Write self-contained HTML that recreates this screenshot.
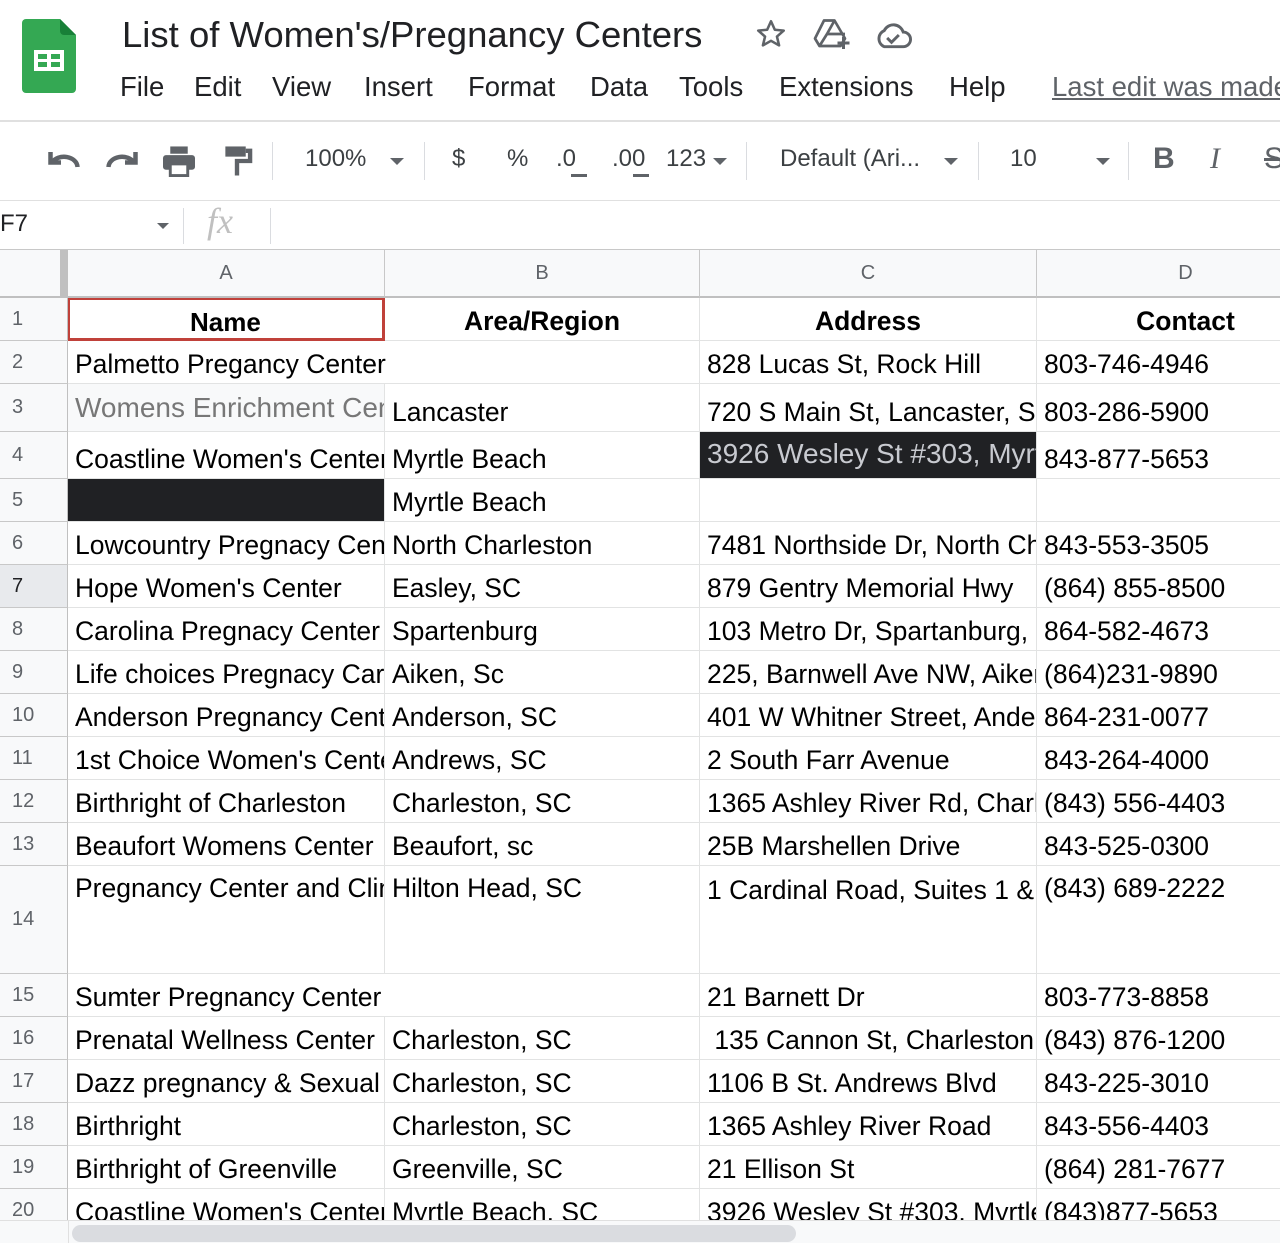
<!DOCTYPE html>
<html><head><meta charset="utf-8">
<style>
*{box-sizing:border-box;margin:0;padding:0}
body{width:1280px;height:1243px;overflow:hidden;background:#fff;font-family:"Liberation Sans",Arial,sans-serif;position:relative;color:#000}
.a{position:absolute}
.t{white-space:nowrap}
.c{position:absolute;overflow:hidden;white-space:nowrap;font-size:26.5px;line-height:30px;padding-left:7px;display:flex;align-items:flex-end;padding-bottom:4px;border-right:1px solid #e2e3e3;border-bottom:1px solid #e2e3e3}
.rh{position:absolute;left:0;width:68px;background:#f8f9fa;color:#5f6368;font-size:20px;padding-left:12px;display:flex;align-items:center;border-bottom:1px solid #c8c8c8;border-right:1px solid #c0c0c0}
.ch{position:absolute;top:250px;height:48px;background:#f8f9fa;color:#5f6368;font-size:20px;display:flex;align-items:center;justify-content:center;border-right:1px solid #c8c8c8;border-bottom:2px solid #c0c0c0}
.tb{position:absolute;top:145px;font-size:24px;color:#3c4043}
.sep{position:absolute;top:142px;width:1px;height:38px;background:#dadce0}
.dd{position:absolute;width:0;height:0;border-left:7px solid transparent;border-right:7px solid transparent;border-top:7px solid #5f6368}
</style></head><body>
<svg class="a" style="left:22px;top:19px" width="54" height="74" viewBox="0 0 54 74">
<path d="M4 0H38L54 16V70a4 4 0 0 1-4 4H4a4 4 0 0 1-4-4V4a4 4 0 0 1 4-4z" fill="#34a853"/>
<path d="M38 0L54 16H42a4 4 0 0 1-4-4z" fill="#188038"/>
<rect x="12" y="31" width="30" height="21" fill="#fff"/>
<rect x="16" y="35" width="9" height="5" fill="#34a853"/><rect x="29" y="35" width="9" height="5" fill="#34a853"/>
<rect x="16" y="43" width="9" height="5" fill="#34a853"/><rect x="29" y="43" width="9" height="5" fill="#34a853"/>
</svg>
<div class="a t" style="left:122px;top:14px;font-size:36.5px;color:#202124">List of Women's/Pregnancy Centers</div>
<svg class="a" style="left:754px;top:17px" width="34" height="34" viewBox="0 0 24 24"><path d="M12 3l2.7 6 6.3.6-4.8 4.2 1.5 6.2L12 16.8 6.3 20l1.5-6.2L3 9.6 9.3 9z" fill="none" stroke="#5f6368" stroke-width="1.8" stroke-linejoin="round"/></svg>
<svg class="a" style="left:812px;top:16px" width="42" height="36" viewBox="0 0 28 24"><path d="M8 3h7l7 12-3 5H5L2 15z M5 20l5-8 M15 3l-5 9h12" fill="none" stroke="#5f6368" stroke-width="1.8" stroke-linejoin="round"/><path d="M21 14v8M17 18h8" stroke="#5f6368" stroke-width="2"/></svg>
<svg class="a" style="left:874px;top:20px" width="38" height="30" viewBox="0 0 26 20"><path d="M7 18h13a5 5 0 0 0 0-10 7 7 0 0 0-13-1 6 6 0 0 0 0 11z" fill="none" stroke="#5f6368" stroke-width="2"/><path d="M9 12l3 3 5-5" fill="none" stroke="#5f6368" stroke-width="2"/></svg>
<div class="a t" style="left:120px;top:71px;font-size:27.5px;color:#202124">
<span style="position:absolute;left:0">File</span><span style="position:absolute;left:74px">Edit</span><span style="position:absolute;left:152px">View</span><span style="position:absolute;left:244px">Insert</span><span style="position:absolute;left:348px">Format</span><span style="position:absolute;left:470px">Data</span><span style="position:absolute;left:559px">Tools</span><span style="position:absolute;left:659px">Extensions</span><span style="position:absolute;left:829px">Help</span><span style="position:absolute;left:932px;color:#5f6368;text-decoration:underline">Last edit was made</span></div>
<div class="a" style="left:0;top:120px;width:1280px;height:2px;background:#e0e0e0"></div>
<svg class="a" style="left:46px;top:146px" width="36" height="30" viewBox="0 0 24 20"><path d="M3 4v7h7" fill="none" stroke="#5f6368" stroke-width="3"/><path d="M4 11a9 7 0 0 1 17 3" fill="none" stroke="#5f6368" stroke-width="3"/></svg>
<svg class="a" style="left:104px;top:146px" width="36" height="30" viewBox="0 0 24 20"><path d="M21 4v7h-7" fill="none" stroke="#5f6368" stroke-width="3"/><path d="M20 11a9 7 0 0 0-17 3" fill="none" stroke="#5f6368" stroke-width="3"/></svg>
<svg class="a" style="left:161px;top:145px" width="36" height="32" viewBox="0 0 24 22"><rect x="6" y="1" width="12" height="5" fill="#5f6368"/><rect x="1" y="7" width="22" height="10" rx="2" fill="#5f6368"/><rect x="6" y="13" width="12" height="8" fill="#fff" stroke="#5f6368" stroke-width="2"/></svg>
<svg class="a" style="left:221px;top:145px" width="32" height="32" viewBox="0 0 20 22"><rect x="2" y="1" width="14" height="7" fill="#5f6368"/><path d="M16 4h3v7h-9v10" fill="none" stroke="#5f6368" stroke-width="3"/></svg>
<div class="sep" style="left:272px"></div>
<div class="tb" style="left:305px">100%</div><div class="dd" style="left:390px;top:158px"></div>
<div class="sep" style="left:424px"></div>
<div class="tb" style="left:452px">$</div><div class="tb" style="left:507px">%</div>
<div class="tb" style="left:556px">.0</div><div class="tb" style="left:612px">.00</div>
<div class="a" style="left:571px;top:174px;width:16px;height:3px;background:#5f6368"></div>
<div class="a" style="left:633px;top:174px;width:16px;height:3px;background:#5f6368"></div>
<div class="tb" style="left:666px">123</div><div class="dd" style="left:713px;top:158px"></div>
<div class="sep" style="left:746px"></div>
<div class="tb" style="left:780px">Default (Ari...</div><div class="dd" style="left:944px;top:158px"></div>
<div class="sep" style="left:978px"></div>
<div class="tb" style="left:1010px">10</div><div class="dd" style="left:1096px;top:158px"></div>
<div class="sep" style="left:1128px"></div>
<div class="a t" style="left:1153px;top:142px;font-size:30px;font-weight:bold;color:#5f6368">B</div>
<div class="a t" style="left:1210px;top:142px;font-size:30px;font-style:italic;font-family:'Liberation Serif',serif;color:#5f6368">I</div>
<div class="a t" style="left:1264px;top:142px;font-size:30px;color:#5f6368;text-decoration:line-through">S</div>
<div class="a" style="left:0;top:200px;width:1280px;height:1px;background:#e0e0e0"></div>
<div class="a t" style="left:0;top:210px;font-size:24px;color:#202124">F7</div>
<div class="dd" style="left:157px;top:223px;border-width:6px 6px 0"></div>
<div class="a" style="left:183px;top:208px;width:1px;height:36px;background:#dadce0"></div>
<div class="a t" style="left:207px;top:200px;font-size:36px;font-style:italic;font-family:'Liberation Serif',serif;color:#c0c0c0">fx</div>
<div class="a" style="left:270px;top:208px;width:1px;height:36px;background:#dadce0"></div>
<div class="a" style="left:0;top:249px;width:1280px;height:1px;background:#c8c8c8"></div>
<div class="a" style="left:0;top:250px;width:68px;height:48px;background:#f8f9fa;border-bottom:2px solid #c0c0c0"></div>
<div class="a" style="left:60px;top:250px;width:8px;height:48px;background:#c0c0c0"></div>
<div class="ch" style="left:68px;width:317px">A</div>
<div class="ch" style="left:385px;width:315px">B</div>
<div class="ch" style="left:700px;width:337px">C</div>
<div class="ch" style="left:1037px;width:298px">D</div>

<div class="rh" style="top:298px;height:43px">1</div>
<div class="c" style="left:68px;top:298px;width:317px;height:43px"></div>
<div class="a" style="left:68px;top:298px;width:317px;height:43px;border:3px solid #c0413a;border-width:2px 3px 3px 2px"></div>
<div class="a t" style="left:190px;top:307px;font-size:26px;font-weight:bold">Name</div>
<div class="c" style="left:385px;top:298px;width:315px;height:43px;justify-content:center;font-weight:bold;padding-left:0">Area/Region</div>
<div class="c" style="left:700px;top:298px;width:337px;height:43px;justify-content:center;font-weight:bold;padding-left:0">Address</div>
<div class="c" style="left:1037px;top:298px;width:298px;height:43px;justify-content:center;font-weight:bold;padding-left:0">Contact</div>

<div class="rh" style="top:341px;height:43px">2</div>
<div class="c" style="left:68px;top:341px;width:632px;height:43px">Palmetto Pregancy Center</div>
<div class="c" style="left:700px;top:341px;width:337px;height:43px">828 Lucas St, Rock Hill</div>
<div class="c" style="left:1037px;top:341px;width:298px;height:43px">803-746-4946</div>

<div class="rh" style="top:384px;height:48px">3</div>
<div class="c" style="left:68px;top:384px;width:317px;height:48px;background:#f8f9fa;color:#777;align-items:center;padding-bottom:0;font-size:28px">Womens Enrichment Center</div>
<div class="c" style="left:385px;top:384px;width:315px;height:48px">Lancaster</div>
<div class="c" style="left:700px;top:384px;width:337px;height:48px">720 S Main St, Lancaster, SC</div>
<div class="c" style="left:1037px;top:384px;width:298px;height:48px">803-286-5900</div>

<div class="rh" style="top:432px;height:47px">4</div>
<div class="c" style="left:68px;top:432px;width:317px;height:47px">Coastline Women's Center</div>
<div class="c" style="left:385px;top:432px;width:315px;height:47px">Myrtle Beach</div>
<div class="c" style="left:700px;top:432px;width:337px;height:47px;background:#202124;color:#c8cad0;font-size:28px;align-items:center;padding-bottom:2px">3926 Wesley St #303, Myrtle</div>
<div class="c" style="left:1037px;top:432px;width:298px;height:47px">843-877-5653</div>

<div class="rh" style="top:479px;height:43px">5</div>
<div class="c" style="left:68px;top:479px;width:317px;height:43px;background:#202124"></div>
<div class="c" style="left:385px;top:479px;width:315px;height:43px">Myrtle Beach</div>
<div class="c" style="left:700px;top:479px;width:337px;height:43px"></div>
<div class="c" style="left:1037px;top:479px;width:298px;height:43px"></div>

<div class="rh" style="top:522px;height:43px">6</div>
<div class="c" style="left:68px;top:522px;width:317px;height:43px">Lowcountry Pregnacy Center</div>
<div class="c" style="left:385px;top:522px;width:315px;height:43px">North Charleston</div>
<div class="c" style="left:700px;top:522px;width:337px;height:43px">7481 Northside Dr, North Charleston</div>
<div class="c" style="left:1037px;top:522px;width:298px;height:43px">843-553-3505</div>

<div class="rh" style="top:565px;height:43px;background:#e8eaed;color:#202124">7</div>
<div class="c" style="left:68px;top:565px;width:317px;height:43px">Hope Women's Center</div>
<div class="c" style="left:385px;top:565px;width:315px;height:43px">Easley, SC</div>
<div class="c" style="left:700px;top:565px;width:337px;height:43px">879 Gentry Memorial Hwy</div>
<div class="c" style="left:1037px;top:565px;width:298px;height:43px">(864) 855-8500</div>

<div class="rh" style="top:608px;height:43px">8</div>
<div class="c" style="left:68px;top:608px;width:317px;height:43px">Carolina Pregnacy Center</div>
<div class="c" style="left:385px;top:608px;width:315px;height:43px">Spartenburg</div>
<div class="c" style="left:700px;top:608px;width:337px;height:43px">103 Metro Dr, Spartanburg, SC</div>
<div class="c" style="left:1037px;top:608px;width:298px;height:43px">864-582-4673</div>

<div class="rh" style="top:651px;height:43px">9</div>
<div class="c" style="left:68px;top:651px;width:317px;height:43px">Life choices Pregnacy Care</div>
<div class="c" style="left:385px;top:651px;width:315px;height:43px">Aiken, Sc</div>
<div class="c" style="left:700px;top:651px;width:337px;height:43px">225, Barnwell Ave NW, Aiken</div>
<div class="c" style="left:1037px;top:651px;width:298px;height:43px">(864)231-9890</div>

<div class="rh" style="top:694px;height:43px">10</div>
<div class="c" style="left:68px;top:694px;width:317px;height:43px">Anderson Pregnancy Center</div>
<div class="c" style="left:385px;top:694px;width:315px;height:43px">Anderson, SC</div>
<div class="c" style="left:700px;top:694px;width:337px;height:43px">401 W Whitner Street, Anderson</div>
<div class="c" style="left:1037px;top:694px;width:298px;height:43px">864-231-0077</div>

<div class="rh" style="top:737px;height:43px">11</div>
<div class="c" style="left:68px;top:737px;width:317px;height:43px">1st Choice Women's Center</div>
<div class="c" style="left:385px;top:737px;width:315px;height:43px">Andrews, SC</div>
<div class="c" style="left:700px;top:737px;width:337px;height:43px">2 South Farr Avenue</div>
<div class="c" style="left:1037px;top:737px;width:298px;height:43px">843-264-4000</div>

<div class="rh" style="top:780px;height:43px">12</div>
<div class="c" style="left:68px;top:780px;width:317px;height:43px">Birthright of Charleston</div>
<div class="c" style="left:385px;top:780px;width:315px;height:43px">Charleston, SC</div>
<div class="c" style="left:700px;top:780px;width:337px;height:43px">1365 Ashley River Rd, Charleston</div>
<div class="c" style="left:1037px;top:780px;width:298px;height:43px">(843) 556-4403</div>

<div class="rh" style="top:823px;height:43px">13</div>
<div class="c" style="left:68px;top:823px;width:317px;height:43px">Beaufort Womens Center</div>
<div class="c" style="left:385px;top:823px;width:315px;height:43px">Beaufort, sc</div>
<div class="c" style="left:700px;top:823px;width:337px;height:43px">25B Marshellen Drive</div>
<div class="c" style="left:1037px;top:823px;width:298px;height:43px">843-525-0300</div>

<div class="rh" style="top:866px;height:108px">14</div>
<div class="c" style="left:68px;top:866px;width:317px;height:108px;align-items:flex-start;padding-top:7px">Pregnancy Center and Clinic</div>
<div class="c" style="left:385px;top:866px;width:315px;height:108px;align-items:flex-start;padding-top:7px">Hilton Head, SC</div>
<div class="c" style="left:700px;top:866px;width:337px;height:108px;align-items:flex-start;padding-top:9px">1 Cardinal Road, Suites 1 &amp; 2</div>
<div class="c" style="left:1037px;top:866px;width:298px;height:108px;align-items:flex-start;padding-top:7px">(843) 689-2222</div>

<div class="rh" style="top:974px;height:43px">15</div>
<div class="c" style="left:68px;top:974px;width:632px;height:43px">Sumter Pregnancy Center</div>
<div class="c" style="left:700px;top:974px;width:337px;height:43px">21 Barnett Dr</div>
<div class="c" style="left:1037px;top:974px;width:298px;height:43px">803-773-8858</div>

<div class="rh" style="top:1017px;height:43px">16</div>
<div class="c" style="left:68px;top:1017px;width:317px;height:43px">Prenatal Wellness Center</div>
<div class="c" style="left:385px;top:1017px;width:315px;height:43px">Charleston, SC</div>
<div class="c" style="left:700px;top:1017px;width:337px;height:43px">&nbsp;135 Cannon St, Charleston</div>
<div class="c" style="left:1037px;top:1017px;width:298px;height:43px">(843) 876-1200</div>

<div class="rh" style="top:1060px;height:43px">17</div>
<div class="c" style="left:68px;top:1060px;width:317px;height:43px">Dazz pregnancy &amp; Sexual</div>
<div class="c" style="left:385px;top:1060px;width:315px;height:43px">Charleston, SC</div>
<div class="c" style="left:700px;top:1060px;width:337px;height:43px">1106 B St. Andrews Blvd</div>
<div class="c" style="left:1037px;top:1060px;width:298px;height:43px">843-225-3010</div>

<div class="rh" style="top:1103px;height:43px">18</div>
<div class="c" style="left:68px;top:1103px;width:317px;height:43px">Birthright</div>
<div class="c" style="left:385px;top:1103px;width:315px;height:43px">Charleston, SC</div>
<div class="c" style="left:700px;top:1103px;width:337px;height:43px">1365 Ashley River Road</div>
<div class="c" style="left:1037px;top:1103px;width:298px;height:43px">843-556-4403</div>

<div class="rh" style="top:1146px;height:43px">19</div>
<div class="c" style="left:68px;top:1146px;width:317px;height:43px">Birthright of Greenville</div>
<div class="c" style="left:385px;top:1146px;width:315px;height:43px">Greenville, SC</div>
<div class="c" style="left:700px;top:1146px;width:337px;height:43px">21 Ellison St</div>
<div class="c" style="left:1037px;top:1146px;width:298px;height:43px">(864) 281-7677</div>

<div class="rh" style="top:1189px;height:43px">20</div>
<div class="c" style="left:68px;top:1189px;width:317px;height:43px">Coastline Women's Center</div>
<div class="c" style="left:385px;top:1189px;width:315px;height:43px">Myrtle Beach, SC</div>
<div class="c" style="left:700px;top:1189px;width:337px;height:43px">3926 Wesley St #303, Myrtle</div>
<div class="c" style="left:1037px;top:1189px;width:298px;height:43px">(843)877-5653</div>

<div class="a" style="left:0;top:1220px;width:1280px;height:23px;background:#f8f9fa;border-top:1px solid #e0e0e0"></div>
<div class="a" style="left:68px;top:1220px;width:1px;height:23px;background:#e0e0e0"></div>
<div class="a" style="left:72px;top:1225px;width:724px;height:17px;border-radius:9px;background:#dadce0"></div>
</body></html>
